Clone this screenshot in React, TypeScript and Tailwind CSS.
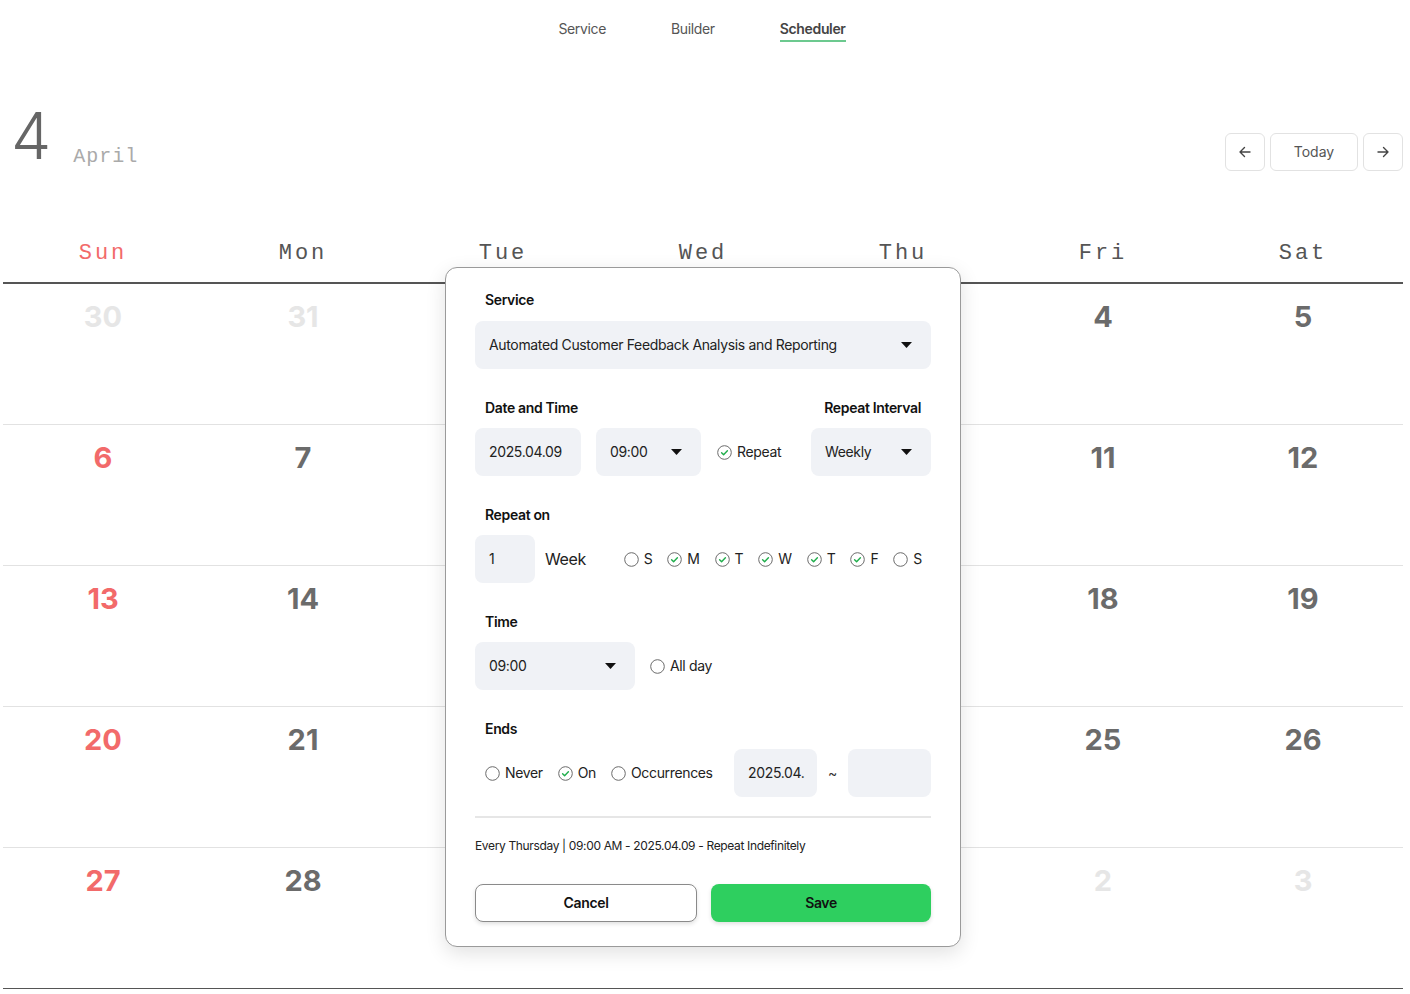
import React from "react";

const days = ["Sun", "Mon", "Tue", "Wed", "Thu", "Fri", "Sat"];

const weeks: { d: number; muted?: boolean }[][] = [
  [{ d: 30, muted: true }, { d: 31, muted: true }, { d: 1 }, { d: 2 }, { d: 3 }, { d: 4 }, { d: 5 }],
  [{ d: 6 }, { d: 7 }, { d: 8 }, { d: 9 }, { d: 10 }, { d: 11 }, { d: 12 }],
  [{ d: 13 }, { d: 14 }, { d: 15 }, { d: 16 }, { d: 17 }, { d: 18 }, { d: 19 }],
  [{ d: 20 }, { d: 21 }, { d: 22 }, { d: 23 }, { d: 24 }, { d: 25 }, { d: 26 }],
  [{ d: 27 }, { d: 28 }, { d: 29 }, { d: 30 }, { d: 1, muted: true }, { d: 2, muted: true }, { d: 3, muted: true }],
];

const mono = { fontFamily: '"Liberation Mono", monospace' };
const inter = { fontFamily: 'Inter, "Noto Sans", sans-serif' };

const Caret = () => (
  <svg width="11" height="6" viewBox="0 0 11 6">
    <path d="M0 0h11L5.5 6z" fill="#111" />
  </svg>
);

const Check = ({ on }: { on?: boolean }) => (
  <svg width="15" height="15" viewBox="0 0 15 15" className="shrink-0">
    <circle cx="7.5" cy="7.5" r="6.8" fill="white" stroke="#6b6b6b" strokeWidth="1" />
    {on && <path d="M4.6 7.7l2 2 3.8-4" fill="none" stroke="#1fae4b" strokeWidth="1.4" strokeLinecap="round" strokeLinejoin="round" />}
  </svg>
);

const Opt = ({ on, label, className = "" }: { on?: boolean; label: string; className?: string }) => (
  <div className={"flex items-center gap-[5px] text-sm text-[#222] " + className}>
    <Check on={on} />
    <span>{label}</span>
  </div>
);

const Arrow = ({ dir }: { dir: "l" | "r" }) => (
  <svg width="16" height="16" viewBox="0 0 16 16" fill="none" stroke="#444" strokeWidth="1.4" strokeLinecap="round" strokeLinejoin="round">
    {dir === "l" ? <path d="M13 8H3M7.5 3.5 3 8l4.5 4.5" /> : <path d="M3 8h10M8.5 3.5 13 8l-4.5 4.5" />}
  </svg>
);

function Modal() {
  return (
    <div
      className="absolute left-[445px] top-[267px] w-[516px] h-[680px] rounded-xl border border-[#9a9a9a] bg-white shadow-[0_6px_20px_rgba(0,0,0,0.12)] px-[29px] pt-[22px] tracking-[-0.35px]"
      style={inter}
    >
      {/* Service */}
      <div className="pl-[10px] text-sm font-semibold leading-5 text-[#111]">Service</div>
      <div className="mt-[11px] h-12 rounded-lg bg-[#f0f2f6] flex items-center justify-between pl-[14px] pr-[19px] text-sm text-[#222]">
        <span>Automated Customer Feedback Analysis and Reporting</span>
        <Caret />
      </div>

      {/* Date and Time */}
      <div className="mt-[29px] flex justify-between px-[10px] text-sm font-semibold leading-5 text-[#111]">
        <span>Date and Time</span>
        <span>Repeat Interval</span>
      </div>
      <div className="mt-[10px] flex items-center h-12 text-sm text-[#222]">
        <div className="h-12 w-[106px] rounded-lg bg-[#f0f2f6] flex items-center pl-[14px]">2025.04.09</div>
        <div className="ml-[15px] h-12 w-[105px] rounded-lg bg-[#f0f2f6] flex items-center justify-between pl-[14px] pr-[19px]">
          <span>09:00</span>
          <Caret />
        </div>
        <Opt on label="Repeat" className="ml-[16px]" />
        <div className="ml-auto h-12 w-[120px] rounded-lg bg-[#f0f2f6] flex items-center justify-between pl-[14px] pr-[19px]">
          <span>Weekly</span>
          <Caret />
        </div>
      </div>

      {/* Repeat on */}
      <div className="mt-[29px] pl-[10px] text-sm font-semibold leading-5 text-[#111]">Repeat on</div>
      <div className="mt-[10px] flex items-center h-12 text-sm text-[#222]">
        <div className="h-12 w-[60px] rounded-lg bg-[#f0f2f6] flex items-center pl-[14px]">1</div>
        <span className="ml-[10px] text-base">Week</span>
        <div className="ml-auto mr-[9px] flex items-center gap-[15px]">
          <Opt label="S" />
          <Opt on label="M" />
          <Opt on label="T" />
          <Opt on label="W" />
          <Opt on label="T" />
          <Opt on label="F" />
          <Opt label="S" />
        </div>
      </div>

      {/* Time */}
      <div className="mt-[29px] pl-[10px] text-sm font-semibold leading-5 text-[#111]">Time</div>
      <div className="mt-[10px] flex items-center h-12 text-sm text-[#222]">
        <div className="h-12 w-[160px] rounded-lg bg-[#f0f2f6] flex items-center justify-between pl-[14px] pr-[19px]">
          <span>09:00</span>
          <Caret />
        </div>
        <Opt label="All day" className="ml-[15px]" />
      </div>

      {/* Ends */}
      <div className="mt-[29px] pl-[10px] text-sm font-semibold leading-5 text-[#111]">Ends</div>
      <div className="mt-[10px] flex items-center h-12 text-sm text-[#222] pl-[10px]">
        <Opt label="Never" />
        <Opt on label="On" className="ml-[15px]" />
        <Opt label="Occurrences" className="ml-[15px]" />
        <div className="ml-auto h-12 w-[83px] rounded-lg bg-[#f0f2f6] flex items-center pl-[14px] overflow-hidden whitespace-nowrap">2025.04.</div>
        <span className="mx-[11px] text-[#333]">~</span>
        <div className="h-12 w-[83px] rounded-lg bg-[#f0f2f6]" />
      </div>

      <div className="mt-[19px] border-t-2 border-[#e6e6e6]" />
      <div className="mt-[20px] text-xs leading-4 text-[#222]">
        Every Thursday | 09:00 AM - 2025.04.09 - Repeat Indefinitely
      </div>

      <div className="mt-[30px] flex gap-[14px]">
        <button className="h-[38px] flex-1 rounded-lg border border-[#8a8a8a] bg-white text-sm font-semibold text-[#111] shadow-[0_2px_4px_rgba(0,0,0,0.12)]">
          Cancel
        </button>
        <button className="h-[38px] flex-1 rounded-lg bg-[#2ecf5f] text-sm font-semibold text-[#111] shadow-[0_2px_4px_rgba(0,0,0,0.12)]">
          Save
        </button>
      </div>
    </div>
  );
}

export default function App() {
  return (
    <div className="relative min-h-[994px] w-[1410px] bg-white" style={inter}>
      {/* Tabs */}
      <div className="flex justify-center gap-[65px] pt-[19px] pr-[6px] text-sm leading-5 text-[#555] tracking-[-0.35px]">
        <span>Service</span>
        <span>Builder</span>
        <span className="font-semibold text-[#444] border-b-2 border-[#6cc98f] pb-px">Scheduler</span>
      </div>

      {/* Month heading */}
      <div className="mt-[62px] flex items-end justify-between pl-[11px] pr-[7px]">
        <div className="flex items-end">
          <span className="text-[64px] font-light leading-none text-[#666]">4</span>
          <span className="ml-[22px] mb-[-4px] text-[20px] tracking-[1px] text-[#aaa]" style={mono}>April</span>
        </div>
        <div className="flex gap-[5px] mb-[-3px]">
          <button className="h-[38px] w-10 rounded-md border border-[#e2e2e2] flex items-center justify-center">
            <Arrow dir="l" />
          </button>
          <button className="h-[38px] w-[88px] rounded-md border border-[#e2e2e2] text-sm text-[#555]">Today</button>
          <button className="h-[38px] w-10 rounded-md border border-[#e2e2e2] flex items-center justify-center">
            <Arrow dir="r" />
          </button>
        </div>
      </div>

      {/* Calendar */}
      <div className="mx-[3px] mt-[56px] w-[1400px]">
        <div className="grid grid-cols-7 h-[60px] border-b-2 border-[#555] items-center">
          {days.map((d, i) => (
            <div
              key={d}
              className={"text-center text-[22px] tracking-[3px] " + (i === 0 ? "text-[#f26a6a]" : "text-[#555]")}
              style={mono}
            >
              {d}
            </div>
          ))}
        </div>
        {weeks.map((w, wi) => (
          <div
            key={wi}
            className={
              "grid grid-cols-7 h-[141px] border-b " + (wi === weeks.length - 1 ? "border-[#555]" : "border-[#e2e2e2]")
            }
          >
            {w.map((c, ci) => (
              <div
                key={ci}
                className={
                  "pt-[17px] text-center text-[29px] font-bold leading-8 " +
                  (c.muted ? "text-[#e6e6e6]" : ci === 0 ? "text-[#f26a6a]" : "text-[#6b6b6b]")
                }
              >
                {c.d}
              </div>
            ))}
          </div>
        ))}
      </div>

      <Modal />
    </div>
  );
}
